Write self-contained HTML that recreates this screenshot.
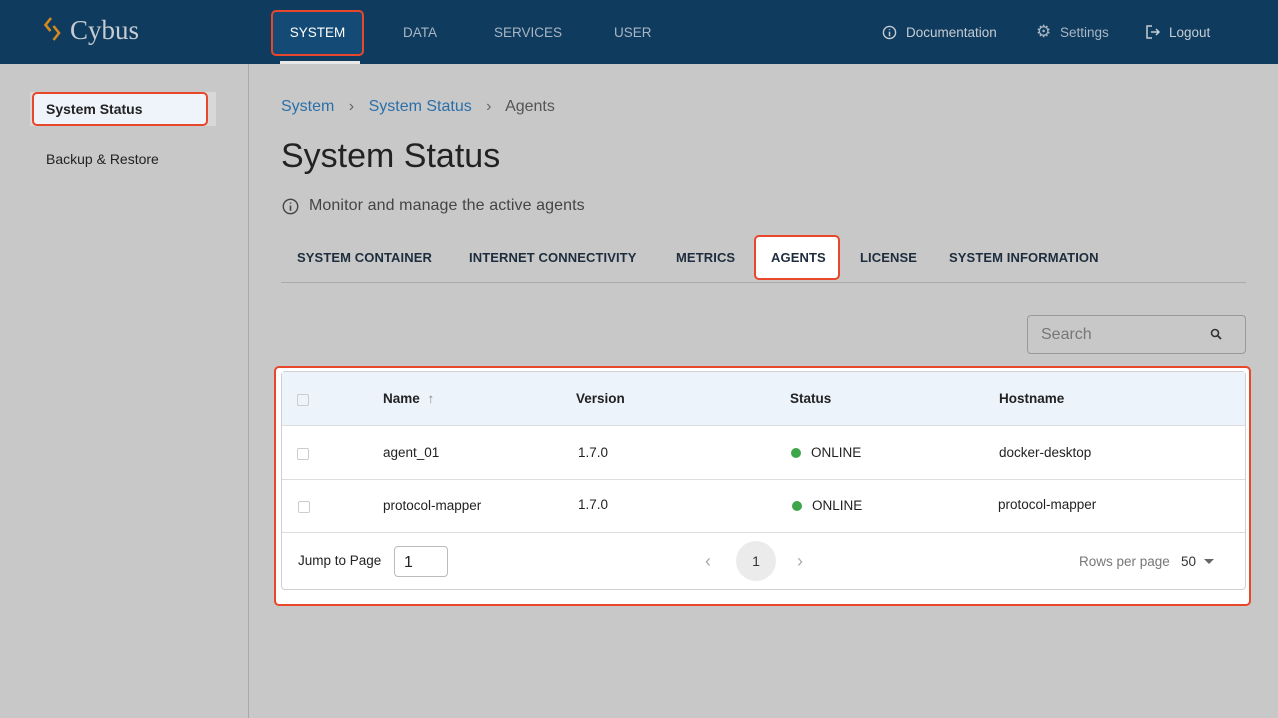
<!DOCTYPE html>
<html><head><meta charset="utf-8"><style>
*{box-sizing:border-box;margin:0;padding:0}
body{width:1278px;height:718px;overflow:hidden;background:#c8c8c8;font-family:"Liberation Sans",sans-serif;position:relative;color:#222}
.hdr{position:absolute;left:0;top:0;width:1278px;height:64px;background:#0f3b5f}
.abs{position:absolute}
.nav{color:#a9b6c3;font-size:13.5px;top:25px}
.red{border:2px solid #e8472b;border-radius:5px}
.side{position:absolute;left:248px;top:64px;width:1px;height:654px;background:#a8a8a8}
.tab{position:absolute;top:250px;font-size:13px;font-weight:bold;color:#1e2d3d;letter-spacing:.1px}
.th{position:absolute;font-size:13.5px;font-weight:bold;color:#222}
.td{position:absolute;font-size:13.5px;color:#222}
.cb{position:absolute;width:12px;height:12px;border:1px solid #ccc;border-radius:2px;background:#fff}
.dot{display:inline-block;width:10px;height:10px;border-radius:50%;background:#3ea64a;margin-right:10px;vertical-align:-1px}
</style></head><body>
<div class="hdr"></div>
<svg class="abs" style="left:43px;top:16px" width="20" height="28" viewBox="0 0 20 28"><path d="M8 2 L2.5 9 L7.5 15" stroke="#d4891e" stroke-width="2.6" fill="none"/><path d="M10.5 10 L16 17 L10.5 24" stroke="#d4891e" stroke-width="2.6" fill="none"/></svg>
<div class="abs" style="left:70px;top:15px;font-family:'Liberation Serif',serif;font-size:27px;color:#c6ccd2">Cybus</div>
<div class="abs red" style="left:271px;top:10px;width:93px;height:46px;background:#144b76;color:#fff;font-size:13.5px;text-align:center;line-height:42px">SYSTEM</div>
<div class="abs" style="left:280px;top:61px;width:80px;height:3px;background:#e8e8e8"></div>
<div class="abs nav" style="left:403px">DATA</div>
<div class="abs nav" style="left:494px">SERVICES</div>
<div class="abs nav" style="left:614px">USER</div>
<svg class="abs" style="left:882px;top:25px" width="15" height="15" viewBox="0 0 16 16"><circle cx="8" cy="8" r="6.5" stroke="#c6ccd2" stroke-width="1.5" fill="none"/><path d="M8 7v5M8 4.5v1" stroke="#c6ccd2" stroke-width="1.6"/></svg>
<div class="abs nav" style="left:906px;color:#c6ccd2">Documentation</div>
<div class="abs" style="left:1036px;top:22px;font-size:17px;color:#a9b6c3">⚙</div>
<div class="abs nav" style="left:1060px">Settings</div>
<svg class="abs" style="left:1145px;top:24px" width="16" height="16" viewBox="0 0 16 16"><path d="M7 2H2v12h5M6 8h8M11 5l3 3-3 3" stroke="#c6ccd2" stroke-width="1.5" fill="none"/></svg>
<div class="abs nav" style="left:1169px;color:#c6ccd2">Logout</div>

<div class="abs" style="left:30px;top:92px;width:186px;height:34px;background:#d8d8d8"></div>
<div class="abs red" style="left:32px;top:92px;width:176px;height:34px;background:#eff4fb;font-size:14px;font-weight:bold;padding-left:12px;line-height:30px;color:#222">System Status</div>
<div class="abs" style="left:46px;top:151px;font-size:14px;color:#222">Backup &amp; Restore</div>
<div class="side"></div>

<div class="abs" style="left:281px;top:98px;font-size:16px;color:#2b6fa8">System <span style="color:#666;margin:0 10px">›</span> System Status <span style="color:#666;margin:0 10px">›</span> <span style="color:#555">Agents</span></div>
<div class="abs" style="left:281px;top:137px;font-size:34px;color:#222">System Status</div>
<svg class="abs" style="left:282px;top:198px" width="17" height="17" viewBox="0 0 16 16"><circle cx="8" cy="8" r="6.8" stroke="#444" stroke-width="1.3" fill="none"/><path d="M8 7v5M8 4.2v1.2" stroke="#444" stroke-width="1.5"/></svg>
<div class="abs" style="left:309px;top:197px;font-size:16px;color:#444;letter-spacing:.1px">Monitor and manage the active agents</div>

<div class="tab" style="left:297px">SYSTEM CONTAINER</div>
<div class="tab" style="left:469px">INTERNET CONNECTIVITY</div>
<div class="tab" style="left:676px">METRICS</div>
<div class="abs red" style="left:754px;top:235px;width:86px;height:45px;background:#fff"></div>
<div class="tab" style="left:771px">AGENTS</div>
<div class="tab" style="left:860px">LICENSE</div>
<div class="tab" style="left:949px">SYSTEM INFORMATION</div>
<div class="abs" style="left:281px;top:282px;width:965px;height:1px;background:#aaa"></div>

<div class="abs" style="left:1027px;top:315px;width:219px;height:39px;border:1px solid #999;border-radius:4px"></div>
<div class="abs" style="left:1041px;top:326px;font-size:16px;color:#777">Search</div>
<svg class="abs" style="left:1210px;top:328px" width="13" height="13" viewBox="0 0 13 13"><circle cx="5" cy="5" r="3.5" stroke="#333" stroke-width="1.6" fill="none"/><path d="M7.5 7.5L11 11" stroke="#333" stroke-width="1.8"/></svg>

<div class="abs red" style="left:274px;top:366px;width:977px;height:240px;background:#fff"></div>
<div class="abs" style="left:281px;top:371px;width:965px;height:219px;border:1px solid #d0d0d0;border-radius:4px;background:#fff"></div>
<div class="abs" style="left:282px;top:372px;width:963px;height:54px;background:#edf3fb;border-bottom:1px solid #ddd"></div>
<div class="abs" style="left:282px;top:479px;width:963px;height:1px;background:#ddd"></div>
<div class="abs" style="left:282px;top:532px;width:963px;height:1px;background:#ddd"></div>
<div class="cb" style="left:297px;top:394px;background:#edf3fb"></div>
<div class="cb" style="left:297px;top:448px"></div>
<div class="cb" style="left:298px;top:501px"></div>
<div class="th" style="left:383px;top:391px">Name <span style="color:#888;font-weight:normal;margin-left:4px">↑</span></div>
<div class="th" style="left:576px;top:391px">Version</div>
<div class="th" style="left:790px;top:391px">Status</div>
<div class="th" style="left:999px;top:391px">Hostname</div>
<div class="td" style="left:383px;top:445px">agent_01</div>
<div class="td" style="left:578px;top:445px">1.7.0</div>
<div class="td" style="left:791px;top:445px"><span class="dot"></span>ONLINE</div>
<div class="td" style="left:999px;top:445px">docker-desktop</div>
<div class="td" style="left:383px;top:498px">protocol-mapper</div>
<div class="td" style="left:578px;top:497px">1.7.0</div>
<div class="td" style="left:792px;top:498px"><span class="dot"></span>ONLINE</div>
<div class="td" style="left:998px;top:497px">protocol-mapper</div>

<div class="td" style="left:298px;top:553px">Jump to Page</div>
<div class="abs" style="left:394px;top:546px;width:54px;height:31px;border:1px solid #bbb;border-radius:4px;font-size:16px;padding:7px 0 0 9px">1</div>
<div class="abs" style="left:705px;top:551px;font-size:18px;color:#aaa">‹</div>
<div class="abs" style="left:736px;top:541px;width:40px;height:40px;border-radius:50%;background:#ebebeb;text-align:center;line-height:40px;font-size:14px;color:#333">1</div>
<div class="abs" style="left:797px;top:551px;font-size:18px;color:#aaa">›</div>
<div class="abs" style="left:1079px;top:554px;font-size:13.5px;color:#777">Rows per page</div>
<div class="abs" style="left:1181px;top:554px;font-size:13.5px;color:#333">50</div>
<div class="abs" style="left:1204px;top:559px;width:0;height:0;border-left:5px solid transparent;border-right:5px solid transparent;border-top:5px solid #666"></div>
</body></html>
